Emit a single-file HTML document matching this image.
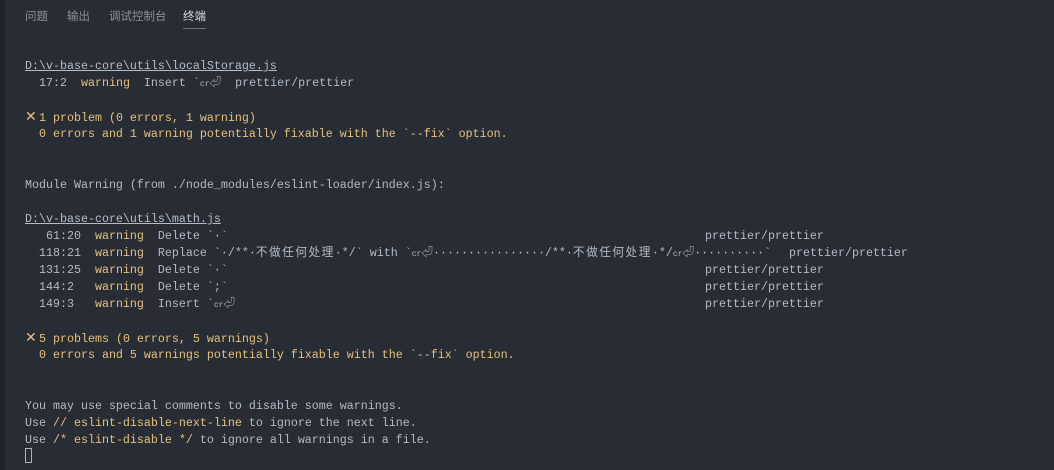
<!DOCTYPE html>
<html><head><meta charset="utf-8"><style>
html,body{margin:0;padding:0;}
body{width:1054px;height:470px;background:#282c34;position:relative;overflow:hidden;font-family:"Liberation Mono","Noto Sans CJK SC",monospace;}
.strip{position:absolute;left:0;top:0;width:5px;height:470px;background:#21252b;}
.tabs{position:absolute;top:8px;left:25px;font-family:"Liberation Sans","Noto Sans CJK SC",sans-serif;font-size:11.5px;color:#8b919c;}
.tabs span{position:absolute;white-space:nowrap;}
.tabs .act{color:#d7dae0;}
.uline{position:absolute;left:183px;top:28px;width:23px;height:1px;background:#6b717c;}
.term{position:absolute;left:25px;top:58px;font-size:11.67px;line-height:17px;color:#b3bac6;}
.l{height:17px;position:relative;white-space:pre;}
.y{color:#e5c07b;}
.u{text-decoration:underline;color:#b5bcc8;}
.p{position:absolute;left:680px;top:0;}
.cr{font-size:8px;}
.x{display:inline-block;width:14px;font-weight:bold;font-size:14px;font-family:"DejaVu Sans",sans-serif;line-height:17px;}
.cj{letter-spacing:1.5px;}
.cur{position:absolute;left:25px;top:448px;width:7px;height:15px;border:1px solid #abb2bf;box-sizing:border-box;}
</style></head><body>
<div class="strip"></div>
<div class="tabs"><span style="left:0">问题</span><span style="left:42px">输出</span><span style="left:84px">调试控制台</span><span class="act" style="left:158px">终端</span></div>
<div class="uline"></div>
<div class="term"><div class="l"><span class="u">D:\v-base-core\utils\localStorage.js</span></div><div class="l">  17:2  <span class="y">warning</span>  Insert `<span class="cr">cr</span>⏎  prettier/prettier</div><div class="l"></div><div class="l y"><span class="x">✕</span>1 problem (0 errors, 1 warning)</div><div class="l y">  0 errors and 1 warning potentially fixable with the `--fix` option.</div><div class="l"></div><div class="l"></div><div class="l">Module Warning (from ./node_modules/eslint-loader/index.js):</div><div class="l"></div><div class="l"><span class="u">D:\v-base-core\utils\math.js</span></div><div class="l">   61:20  <span class="y">warning</span>  Delete `·`<span class="p">prettier/prettier</span></div><div class="l">  118:21  <span class="y">warning</span>  Replace `·/**·<span class="cj">不做任何处理</span>·*/` with `<span class="cr">cr</span>⏎················/**·<span class="cj">不做任何处理</span>·*/<span class="cr">cr</span>⏎··········`<span class="p" style="left:764px">prettier/prettier</span></div><div class="l">  131:25  <span class="y">warning</span>  Delete `·`<span class="p">prettier/prettier</span></div><div class="l">  144:2   <span class="y">warning</span>  Delete `;`<span class="p">prettier/prettier</span></div><div class="l">  149:3   <span class="y">warning</span>  Insert `<span class="cr">cr</span>⏎<span class="p">prettier/prettier</span></div><div class="l"></div><div class="l y"><span class="x">✕</span>5 problems (0 errors, 5 warnings)</div><div class="l y">  0 errors and 5 warnings potentially fixable with the `--fix` option.</div><div class="l"></div><div class="l"></div><div class="l">You may use special comments to disable some warnings.</div><div class="l">Use <span class="y">// eslint-disable-next-line</span> to ignore the next line.</div><div class="l">Use <span class="y">/* eslint-disable */</span> to ignore all warnings in a file.</div></div>
<div class="cur"></div>
</body></html>
